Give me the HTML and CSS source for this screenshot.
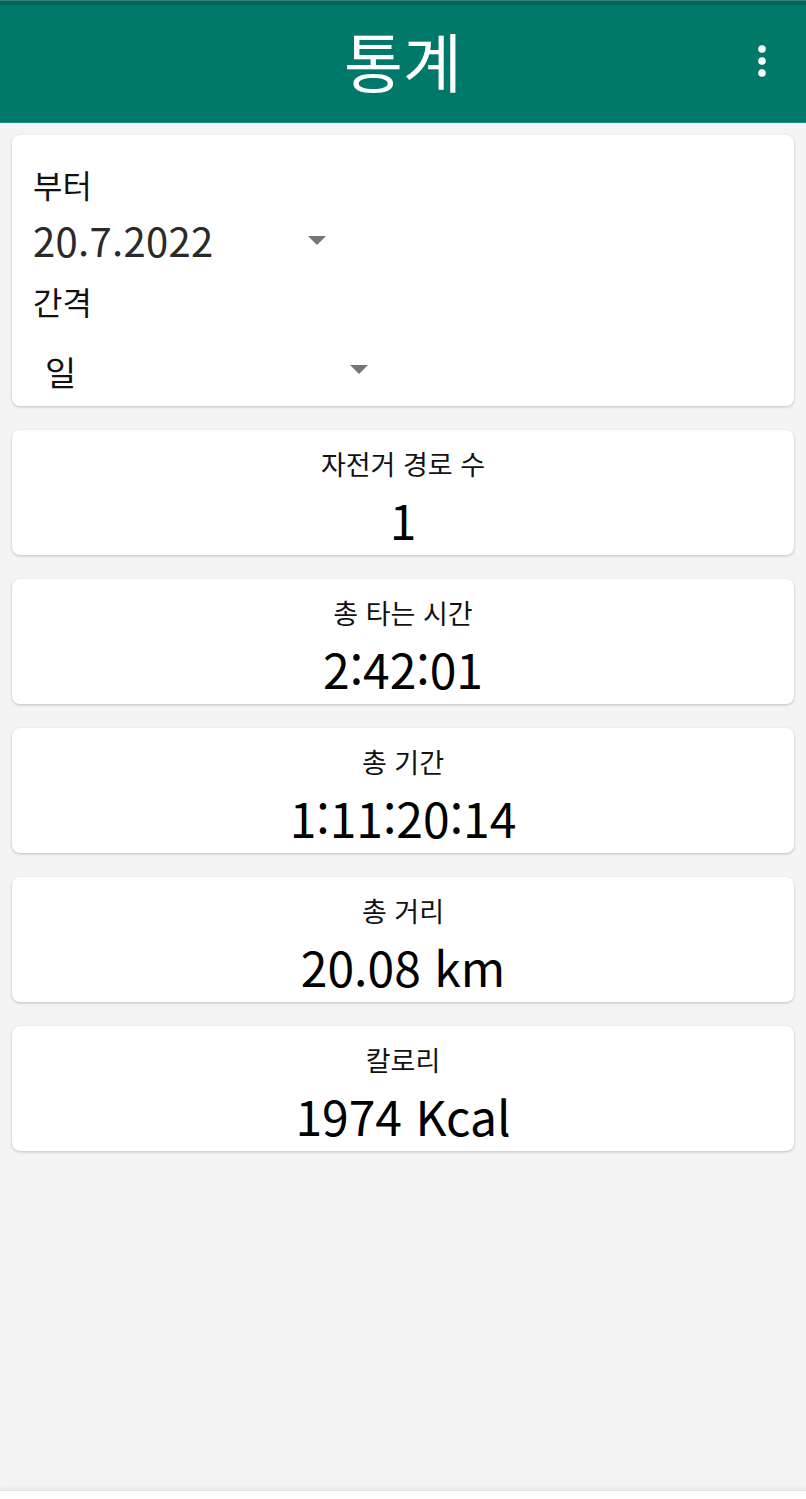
FILE: index.html
```html
<!DOCTYPE html>
<html lang="ko">
<head>
    <meta charset="UTF-8">
    <meta name="viewport" content="width=device-width, initial-scale=1.0">
    <title>통계</title>
    <link rel="stylesheet" href="styles.css">
</head>
<body>
    <header class="topbar">
        <div class="status-strip"></div>
        <div class="toolbar">
            <span></span>
            <h1 class="title">통계</h1>
            <button class="menu-btn" aria-label="메뉴">
                <svg width="12" height="34" viewBox="0 0 12 34">
                    <circle cx="6" cy="5" r="3.8" fill="#fff"/>
                    <circle cx="6" cy="17" r="3.8" fill="#fff"/>
                    <circle cx="6" cy="29" r="3.8" fill="#fff"/>
                </svg>
            </button>
        </div>
    </header>

    <main class="content">
        <section class="card filter-card">
            <div class="field-label">부터</div>
            <div class="spinner spinner-date">
                <span class="spinner-value date-value">20.7.2022</span>
                <span class="arrow"></span>
            </div>
            <div class="field-label field-label-second">간격</div>
            <div class="spinner spinner-interval">
                <span class="spinner-value">일</span>
                <span class="arrow"></span>
            </div>
        </section>

        <section class="card stat-card">
            <div class="stat-label">자전거 경로 수</div>
            <div class="stat-value">1</div>
        </section>
        <section class="card stat-card">
            <div class="stat-label">총 타는 시간</div>
            <div class="stat-value">2:42:01</div>
        </section>
        <section class="card stat-card">
            <div class="stat-label">총 기간</div>
            <div class="stat-value">1:11:20:14</div>
        </section>
        <section class="card stat-card">
            <div class="stat-label">총 거리</div>
            <div class="stat-value">20.08 km</div>
        </section>
        <section class="card stat-card">
            <div class="stat-label">칼로리</div>
            <div class="stat-value">1974 Kcal</div>
        </section>
    </main>

    <div class="navbar-edge"></div>
</body>
</html>
```

FILE: styles.css
```css
*{
    margin: 0;
    padding: 0;
    box-sizing: border-box;
    font-family: "Noto Sans CJK KR", "Noto Sans", sans-serif;
}
html, body {
    height: 100%;
}
body {
    background: #f4f4f4;
    display: flex;
    flex-direction: column;
}
.topbar {
    background: #00796b;
    height: 123px;
    display: flex;
    flex-direction: column;
}
.status-strip {
    height: 5px;
    background: #00665a;
    border-top: 1px solid #3a7f75;
}
.toolbar {
    flex: 1;
    display: grid;
    grid-template-columns: 1fr auto 1fr;
    align-items: center;
    padding-bottom: 10px;
    border-bottom: 1px solid #1e8f80;
}
.title {
    color: #ffffff;
    font-size: 64px;
    font-weight: 400;
    line-height: 1;
}
.menu-btn {
    justify-self: end;
    margin-right: 38px;
    margin-top: 4px;
    background: none;
    border: none;
    display: flex;
    cursor: pointer;
}
.content {
    flex: 1;
    padding: 12px 12px 0;
    display: flex;
    flex-direction: column;
    gap: 24px;
}
.card {
    background: #ffffff;
    border-radius: 8px;
    box-shadow: 0 1px 3px rgba(0, 0, 0, 0.22);
}
.filter-card {
    height: 271px;
    padding: 20px 21px 0;
    display: flex;
    flex-direction: column;
}
.field-label {
    font-size: 32px;
    line-height: 58px;
    height: 58px;
    color: #111;
}
.field-label-second {
    margin-top: 3px;
}
.spinner {
    display: flex;
    align-items: center;
    justify-content: space-between;
    height: 60px;
}
.spinner-date {
    width: 300px;
    padding-right: 7px;
    margin-top: -2px;
}
.spinner-interval {
    width: 345px;
    padding-left: 12px;
    padding-right: 10px;
    padding-top: 6px;
    height: 88px;
}
.spinner-interval .arrow {
    margin-bottom: 4px;
}
.spinner-value {
    font-size: 34px;
    color: #111;
}
.date-value {
    font-size: 40px;
    color: #2a2a2a;
    letter-spacing: 0.3px;
}
.arrow {
    width: 0;
    height: 0;
    border-left: 9px solid transparent;
    border-right: 9px solid transparent;
    border-top: 9px solid #757575;
}
.stat-card {
    height: 125px;
    display: flex;
    flex-direction: column;
    align-items: center;
    padding-top: 14px;
}
.stat-label {
    font-size: 27px;
    line-height: 1.45;
    color: #111;
}
.stat-value {
    font-size: 48px;
    line-height: 1.4;
    margin-top: 3px;
    color: #000;
}
.navbar-edge {
    height: 9px;
    background: #ffffff;
    border-top: 1px solid #e2e2e2;
    box-shadow: 0 -3px 4px rgba(0, 0, 0, 0.04);
}
```
